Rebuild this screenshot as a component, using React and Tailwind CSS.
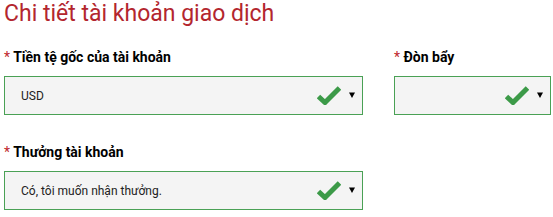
export default function App() {
  const Arrow = () => (
    <svg width="6" height="6" viewBox="0 0 6 6">
      <path d="M0 0.5 H6 L3 6 Z" fill="#000" />
    </svg>
  )
  const Check = () => (
    <svg width="24" height="19" viewBox="0 0 24 19">
      <path d="M1.5 10.5 L8 16.5 L22.5 2" fill="none" stroke="#3c9a48" strokeWidth="5" strokeLinecap="butt" strokeLinejoin="miter" />
    </svg>
  )

  const Select = ({ value, className }) => (
    <div
      className={`h-[39px] border border-[#4aa155] bg-[#f4f4f4] flex items-center pl-[16px] pr-[7px] ${className}`}
    >
      <span className="flex-1 text-[12px] text-[#222]">{value}</span>
      <Check />
      <span className="ml-[8px] flex items-center -mt-[2px]">
        <Arrow />
      </span>
    </div>
  )

  const Label = ({ children }) => (
    <p className="text-[14px] font-bold text-black leading-[16px]">
      <span className="text-[#c0272d] font-normal">*</span> {children}
    </p>
  )

  return (
    <div className="w-[553px] h-[217px] bg-white pl-[4px] font-['Roboto',sans-serif]">
      <h1 className="text-[23px] leading-[28px] text-[#b3262e]">Chi tiết tài khoản giao dịch</h1>
      <div className="flex gap-[31px] mt-[21px]">
        <div className="w-[359px] flex flex-col gap-[11px]">
          <Label>Tiền tệ gốc của tài khoản</Label>
          <Select value="USD" />
        </div>
        <div className="w-[157px] flex flex-col gap-[11px]">
          <Label>Đòn bẩy</Label>
          <Select value="" />
        </div>
      </div>
      <div className="w-[359px] flex flex-col gap-[11px] mt-[29px]">
        <Label>Thưởng tài khoản</Label>
        <Select value="Có, tôi muốn nhận thưởng." />
      </div>
    </div>
  )
}
